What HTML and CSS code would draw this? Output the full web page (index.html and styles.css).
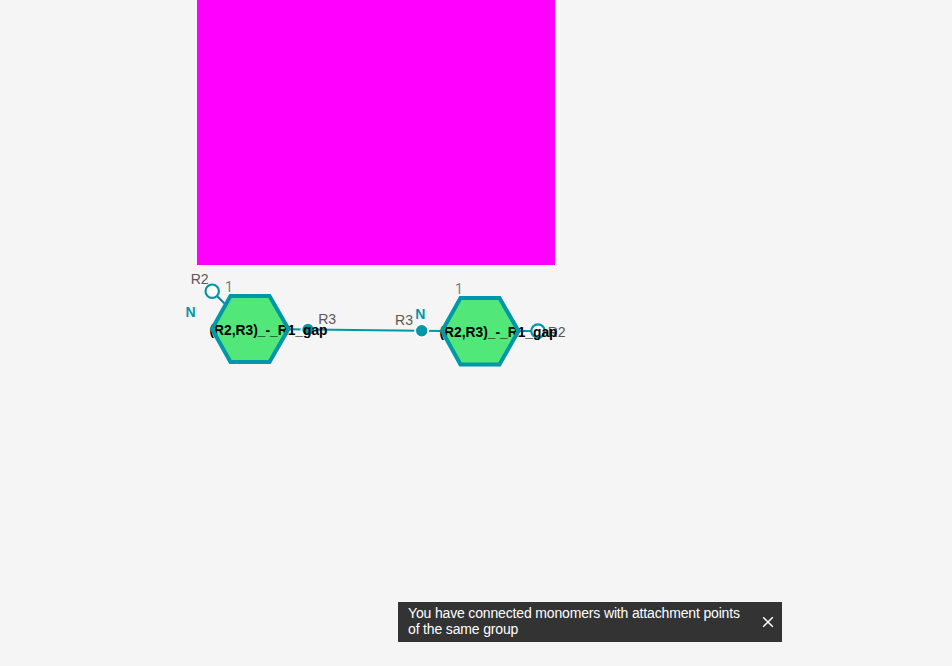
FILE: index.html
```html
<!DOCTYPE html>
<html lang="en">
<head>
<meta charset="utf-8">
<title>Macromolecule canvas</title>
<link rel="stylesheet" href="styles.css">
</head>
<body>
<main class="editor">
<svg class="canvas" width="952" height="666" viewBox="0 0 952 666">
  <rect class="shade" x="199" y="265" width="354" height="1"/>
  <rect class="region" x="197" y="0" width="358" height="265"/>
  <g>
    <path class="bond" d="M288 329.200L442 331M518 331H538"/>
    <path class="bond side" d="M212 291L229 308"/>
    <path class="hex-fill" d="M230.500 296H269.500L288.500 329L269.500 362H230.500L212 329Z"/>
    <path class="hex-fill" d="M460.500 298H499.500L518.500 331L499.500 364.500H460.500L442 331Z"/>
    <circle class="halo" cx="308" cy="329.500" r="7.500"/>
    <circle class="dot" cx="308" cy="329.500" r="5.700"/>
    <circle class="halo" cx="421.700" cy="330.700" r="7.500"/>
    <circle class="dot" cx="421.700" cy="330.700" r="5.700"/>
    <circle class="open" cx="212.200" cy="291.200" r="6.700"/>
    <circle class="open" cx="538" cy="331" r="6.700"/>
  </g>
  <g class="point">
    <text x="190.700" y="284" textLength="18" lengthAdjust="spacingAndGlyphs">R2</text>
    <text x="318.200" y="324" textLength="18" lengthAdjust="spacingAndGlyphs">R3</text>
    <text x="395" y="325.300" textLength="18" lengthAdjust="spacingAndGlyphs">R3</text>
    <text x="547.700" y="337" textLength="18" lengthAdjust="spacingAndGlyphs">R2</text>
  </g>
  <g class="number"><text x="225" y="292">1</text><text x="455" y="294">1</text></g>
  <g class="terminal"><text x="185.500" y="317">N</text><text x="415.300" y="319">N</text></g>
  <g class="name">
    <text x="209.500" y="335" textLength="118" lengthAdjust="spacingAndGlyphs">(R2,R3)_-_R1_gap</text>
    <text x="439.500" y="337" textLength="118" lengthAdjust="spacingAndGlyphs">(R2,R3)_-_R1_gap</text>
  </g>
  <path class="hex-edge" d="M230.500 296H269.500L288.500 329L269.500 362H230.500L212 329Z"/>
  <path class="hex-edge" d="M460.500 298H499.500L518.500 331L499.500 364.500H460.500L442 331Z"/>
</svg>
<div class="toast" role="alert">
  <p class="message">You have connected monomers with attachment points of the same group</p>
  <button class="close" aria-label="Close"><svg width="12" height="12" viewBox="0 0 12 12"><path d="M1.200 1.200L10.800 10.800M10.800 1.200L1.200 10.800"/></svg></button>
</div>
</main>
</body>
</html>
```
FILE: styles.css
```css
body { margin: 0; background: #f5f5f5; font-family: "Liberation Sans", sans-serif; overflow: hidden; }
.editor { position: relative; width: 952px; height: 666px; }
.canvas { display: block; font-size: 14.5px; }
.region { fill: #f0f; }
.shade { fill: #eaeeea; }
.bond { fill: none; stroke: #0097a8; stroke-width: 2; }
.side { stroke: #17808d; }
.hex-fill { fill: #52e879; }
.hex-edge { fill: none; stroke: #0097a8; stroke-width: 4; }
.halo { fill: #fff; }
.dot { fill: #0097a8; }
.open { fill: #fff; stroke: #0097a8; stroke-width: 2.2; }
.point { fill: #585858; }
.number { fill: #7c7c7c; font-family: Roboto, sans-serif; font-size: 14px; }
.terminal { fill: #0097a8; font-weight: bold; font-size: 14px; }
.name { fill: #000; font-weight: bold; }
.toast { position: absolute; left: 398px; top: 602px; width: 384px; height: 40px; box-sizing: border-box; padding: 0 8px 0 10px; display: flex; align-items: center; justify-content: space-between; background: #333; color: #fff; }
.message { margin: 0; padding-bottom: 2px; width: 344px; font-size: 14px; line-height: 16px; letter-spacing: -0.155px; }
.close { padding: 0; border: 0; background: none; display: flex; }
.close svg { fill: none; stroke: #fff; stroke-width: 1.5; }
```
